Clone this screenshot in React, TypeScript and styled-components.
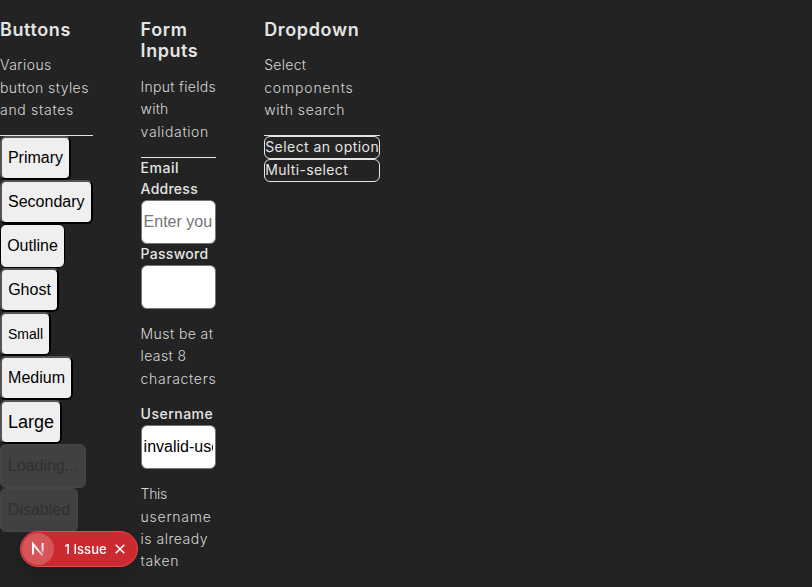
import React from "react";
import styled, { createGlobalStyle } from "styled-components";

const GlobalStyle = createGlobalStyle`
  *, *::before, *::after { box-sizing: border-box; }
  html, body { margin: 0; background: #232323; }
  body { height: 587px; overflow: hidden; color: #e5e5e5; font-family: "Inter", sans-serif; font-size: 14px; }
`;

const Page = styled.main`
  display: flex;
  align-items: flex-start;
  gap: 48px;
  height: 587px;
`;

const Card = styled.section<{ $width: number }>`
  flex: none;
  width: ${(p) => p.$width}px;
  padding-top: 18.6px;
`;

const CardHeader = styled.header`
  border-bottom: 1px solid #e5e5e5;
`;

const Line = styled.span<{ $spacing?: number }>`
  display: block;
  white-space: nowrap;
  letter-spacing: ${(p) => p.$spacing ?? 0}px;
`;

const Title = styled.h3`
  margin: 0 0 14px;
  font-size: 18px;
  font-weight: 600;
  line-height: 21.6px;
`;

const Text = styled.p`
  margin: 14px 0;
  font-size: 14px;
  font-weight: 300;
  line-height: 22.4px;
  color: #d6d6d6;
`;

const Label = styled.label`
  display: block;
  margin-top: -1px;
  padding-bottom: 1px;
  font-size: 14px;
  font-weight: 500;
  line-height: 21px;
`;

const Input = styled.input`
  display: block;
  width: 100%;
  height: 44px;
  padding: 1px 2px;
  border: 1px solid #767676;
  border-radius: 6px;
  background: #fff;
  color: #000;
  font: 16px "Liberation Sans", Arial, sans-serif;
  &::placeholder { color: #757575; }
`;

const Field = styled.div`
  display: flow-root;
`;

const Stack = styled.div`
  display: flex;
  flex-direction: column;
  align-items: flex-start;
`;

const Button = styled.button<{ $width: number; $size?: number; $thin?: boolean }>`
  width: ${(p) => p.$width}px;
  height: 44px;
  padding: 1px 0;
  border: ${(p) => (p.$thin ? "1px solid #000" : "2px outset #000")};
  border-radius: 6px;
  background: #efefef;
  color: #000;
  font: ${(p) => p.$size ?? 16}px "Liberation Sans", Arial, sans-serif;
  white-space: nowrap;
  &:disabled {
    border-color: #454545;
    border-style: solid;
    background: #414141;
    color: #303030;
  }
`;

const Select = styled.div`
  width: 100%;
  height: 23px;
  border: 1px solid #e5e5e5;
  border-radius: 6px;
  line-height: 20px;
  font-size: 14px;
`;

const Toast = styled.div`
  position: fixed;
  left: 20px;
  bottom: 20px;
  display: flex;
  align-items: center;
  width: 118px;
  height: 36px;
  padding-left: 1px;
  border: 1px solid #e5484d;
  border-radius: 18px;
  background: #ca2a30;
  color: #fff;
  font-size: 13px;
  font-weight: 500;
  box-shadow: 0 8px 20px rgba(0, 0, 0, 0.2);
`;

const Mark = styled.span`
  display: flex;
  width: 32px;
  height: 32px;
  margin-right: 10.5px;
  border-radius: 50%;
  background: #d6555a;
`;

const CloseIcon = styled.svg`
  margin-left: 8.5px;
`;

const buttons = [
  { label: "Primary", width: 71 },
  { label: "Secondary", width: 92.6 },
  { label: "Outline", width: 65, thin: true },
  { label: "Ghost", width: 59 },
  { label: "Small", width: 51, size: 14 },
  { label: "Medium", width: 73 },
  { label: "Large", width: 62, size: 18 },
  { label: "Loading...", width: 86, disabled: true },
  { label: "Disabled", width: 78, disabled: true },
];

export default function App() {
  return (
    <>
      <GlobalStyle />
      <Page>
        <Card $width={92.6}>
          <CardHeader>
            <Title><Line $spacing={0.6}>Buttons</Line></Title>
            <Text>
              <Line $spacing={0.45}>Various</Line>
              <Line $spacing={0.43}>button styles</Line>
              <Line $spacing={0.7}>and states</Line>
            </Text>
          </CardHeader>
          <Stack>
            {buttons.map((b) => (
              <Button key={b.label} $width={b.width} $size={b.size} $thin={b.thin} disabled={b.disabled}>
                {b.label}
              </Button>
            ))}
          </Stack>
        </Card>
        <Card $width={75.6}>
          <CardHeader>
            <Title>
              <Line $spacing={0.6}>Form</Line>
              <Line $spacing={0.55}>Inputs</Line>
            </Title>
            <Text>
              <Line $spacing={0.3}>Input fields</Line>
              <Line $spacing={0.2}>with</Line>
              <Line $spacing={0.63}>validation</Line>
            </Text>
          </CardHeader>
          <Field>
            <Label htmlFor="email">
              <Line $spacing={0.5}>Email</Line>
              <Line $spacing={0.25}>Address</Line>
            </Label>
            <Input id="email" placeholder="Enter your email" />
          </Field>
          <Field>
            <Label htmlFor="password"><Line $spacing={0.28}>Password</Line></Label>
            <Input id="password" type="password" />
          </Field>
          <Text>
            <Line $spacing={0.42}>Must be at</Line>
            <Line $spacing={0.38}>least 8</Line>
            <Line $spacing={0.7}>characters</Line>
          </Text>
          <Field>
            <Label htmlFor="username"><Line $spacing={0.48}>Username</Line></Label>
            <Input id="username" defaultValue="invalid-user" />
          </Field>
          <Text>
            <Line $spacing={-0.35}>This</Line>
            <Line $spacing={0.75}>username</Line>
            <Line $spacing={0.5}>is already</Line>
            <Line $spacing={0.6}>taken</Line>
          </Text>
        </Card>
        <Card $width={115.8}>
          <CardHeader>
            <Title><Line $spacing={0.64}>Dropdown</Line></Title>
            <Text>
              <Line $spacing={0.3}>Select</Line>
              <Line $spacing={0.85}>components</Line>
              <Line $spacing={0.53}>with search</Line>
            </Text>
          </CardHeader>
          <Select><Line $spacing={0.44}>Select an option</Line></Select>
          <Select><Line $spacing={0.36}>Multi-select</Line></Select>
        </Card>
      </Page>
      <Toast>
        <Mark>
          <svg width="32" height="32" viewBox="0 0 32 32" fill="none" strokeWidth="1.9">
            <defs>
              <linearGradient id="stem" x1="0" y1="10" x2="0" y2="21" gradientUnits="userSpaceOnUse">
                <stop stopColor="#fff" />
                <stop offset="0.6" stopColor="#fff" stopOpacity="0.8" />
                <stop offset="1" stopColor="#fff" stopOpacity="0" />
              </linearGradient>
              <linearGradient id="diagonal" x1="16" y1="16" x2="22" y2="23" gradientUnits="userSpaceOnUse">
                <stop stopColor="#fff" />
                <stop offset="1" stopColor="#fff" stopOpacity="0.3" />
              </linearGradient>
            </defs>
            <path d="M11 21.6V11L20.6 22.6" stroke="url(#diagonal)" />
            <path d="M20.6 10V21" stroke="url(#stem)" />
          </svg>
        </Mark>
        <Line $spacing={0.05}>1 Issue</Line>
        <CloseIcon width="10" height="10" viewBox="0 0 10 10" stroke="#fff" strokeWidth="1.5">
          <path d="M.7.7 9.3 9.3M9.3.7.7 9.3" />
        </CloseIcon>
      </Toast>
    </>
  );
}
